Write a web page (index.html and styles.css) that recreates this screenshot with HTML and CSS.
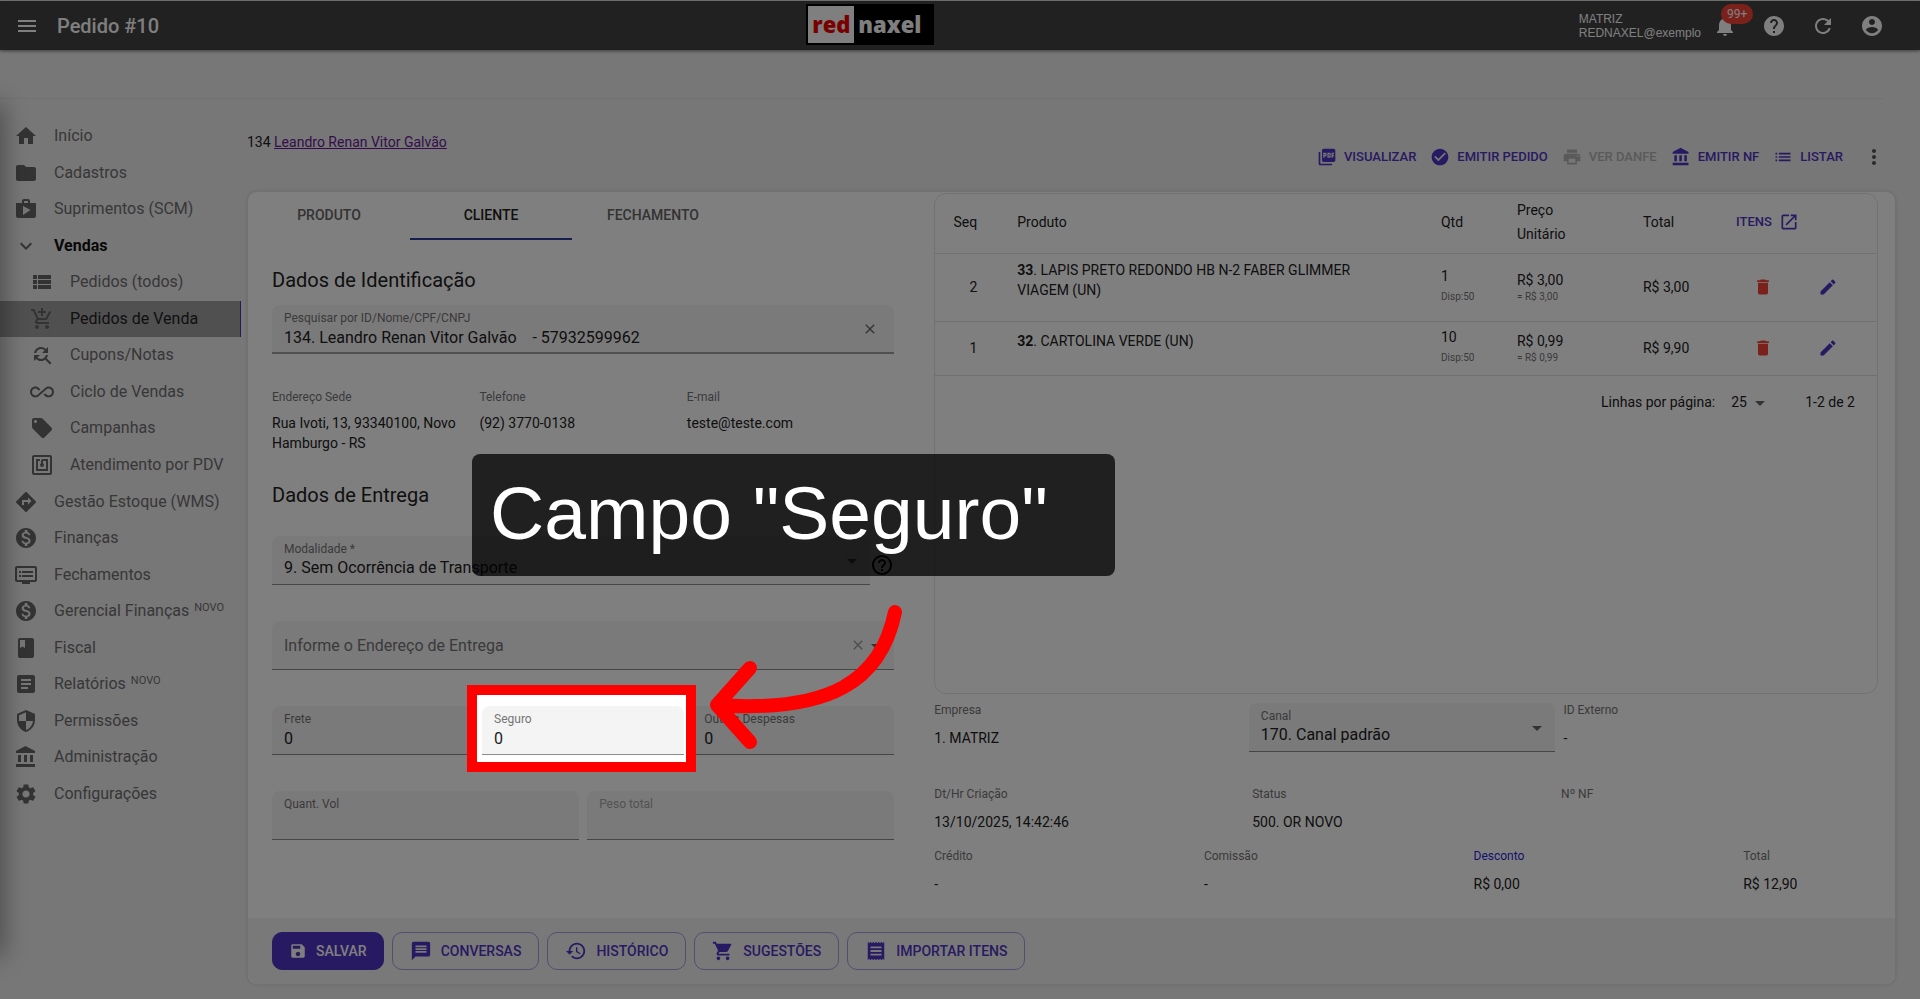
FILE: index.html
```html
<!DOCTYPE html>
<html lang="pt-BR">
<head>
  <meta charset="UTF-8" />
  <meta name="viewport" content="width=device-width, initial-scale=1" />
  <title>Pedido #10</title>
  <link rel="stylesheet" href="styles.css">
</head>
<body>
  <!-- icon set -->
  <svg class="sprite" aria-hidden="true">
    <symbol id="i-menu" viewBox="0 0 24 24"><path d="M3 18h18v-2H3v2zm0-5h18v-2H3v2zm0-7v2h18V6H3z"/></symbol>
    <symbol id="i-home" viewBox="0 0 24 24"><path d="M10 20v-6h4v6h5v-8h3L12 3 2 12h3v8z"/></symbol>
    <symbol id="i-folder" viewBox="0 0 24 24"><path d="M10 4H4c-1.1 0-1.99.9-1.99 2L2 18c0 1.1.9 2 2 2h16c1.1 0 2-.9 2-2V8c0-1.1-.9-2-2-2h-8l-2-2z"/></symbol>
    <symbol id="i-shop" viewBox="0 0 24 24"><path d="M16 6V4c0-1.11-.89-2-2-2h-4c-1.11 0-2 .89-2 2v2H2v13c0 1.11.89 2 2 2h16c1.11 0 2-.89 2-2V6h-6zm-6-2h4v2h-4V4zM9 18V9l7.500 4L9 18z"/></symbol>
    <symbol id="i-expand" viewBox="0 0 24 24"><path d="M16.59 8.59L12 13.17 7.41 8.59 6 10l6 6 6-6z"/></symbol>
    <symbol id="i-viewlist" viewBox="0 0 24 24"><path d="M3 14h4v-4H3v4zm0 5h4v-4H3v4zM3 9h4V5H3v4zm5 5h13v-4H8v4zm0 5h13v-4H8v4zM8 5v4h13V5H8z"/></symbol>
    <symbol id="i-addcart" viewBox="0 0 24 24"><path d="M11 9h2V6h3V4h-3V1h-2v3H8v2h3v3zm-4 9c-1.1 0-1.99.9-1.99 2S5.9 22 7 22s2-.9 2-2-.9-2-2-2zm10 0c-1.1 0-1.99.9-1.99 2s.89 2 1.99 2 2-.9 2-2-.9-2-2-2zm-9.83-3.25l.03-.12.9-1.63h7.45c.75 0 1.41-.41 1.75-1.03l3.86-7.01L19.42 4h-.01l-1.1 2-2.76 5H8.53l-.13-.27L6.16 6l-.95-2-.94-2H1v2h2l3.6 7.59-1.35 2.45c-.16.28-.25.61-.25.96 0 1.1.9 2 2 2h12v-2H7.42c-.13 0-.25-.11-.25-.25z"/></symbol>
    <symbol id="i-findreplace" viewBox="0 0 24 24"><path d="M11 6c1.38 0 2.63.56 3.54 1.46L12 10h6V4l-2.05 2.05C14.68 4.78 12.93 4 11 4c-3.53 0-6.43 2.61-6.92 6H6.1c.46-2.28 2.48-4 4.9-4zm5.64 9.14c.66-.9 1.12-1.97 1.28-3.14H15.9c-.46 2.28-2.48 4-4.9 4-1.38 0-2.63-.56-3.54-1.46L10 12H4v6l2.05-2.05C7.32 17.22 9.07 18 11 18c1.55 0 2.98-.51 4.14-1.36L20 21.49 21.49 20l-4.85-4.86z"/></symbol>
    <symbol id="i-infinite" viewBox="0 0 24 24"><path d="M18.6 6.62c-1.44 0-2.8.56-3.77 1.53L12 10.66 10.48 12h.01L7.8 14.39c-.64.64-1.49.99-2.4.99-1.87 0-3.39-1.51-3.39-3.38S3.53 8.62 5.4 8.62c.91 0 1.76.35 2.44 1.03l1.13 1 1.51-1.34L9.22 8.2C8.2 7.18 6.84 6.62 5.4 6.62 2.42 6.62 0 9.04 0 12s2.42 5.38 5.4 5.38c1.44 0 2.8-.56 3.77-1.53l2.83-2.5.01.01L13.52 12h-.01l2.69-2.39c.64-.64 1.49-.99 2.4-.99 1.87 0 3.39 1.51 3.39 3.38s-1.52 3.38-3.39 3.38c-.9 0-1.76-.35-2.44-1.03l-1.14-1.01-1.51 1.34 1.27 1.12c1.02 1.01 2.37 1.57 3.82 1.57 2.98 0 5.4-2.41 5.4-5.38s-2.42-5.37-5.4-5.37z"/></symbol>
    <symbol id="i-tag" viewBox="0 0 24 24"><path d="M21.41 11.58l-9-9C12.05 2.22 11.55 2 11 2H4c-1.1 0-2 .9-2 2v7c0 .55.22 1.05.59 1.42l9 9c.36.36.86.58 1.41.58.55 0 1.05-.22 1.41-.59l7-7c.37-.36.59-.86.59-1.41 0-.55-.23-1.06-.59-1.42zM5.5 7C4.67 7 4 6.33 4 5.5S4.67 4 5.500 4 7 4.67 7 5.500 6.33 7 5.500 7z"/></symbol>
    <symbol id="i-nfc" viewBox="0 0 24 24"><path d="M20 2H4c-1.1 0-2 .9-2 2v16c0 1.1.9 2 2 2h16c1.1 0 2-.9 2-2V4c0-1.1-.9-2-2-2zm0 18H4V4h16v16zM18 6h-5c-1.1 0-2 .9-2 2v2.28c-.6.35-1 .98-1 1.72 0 1.1.9 2 2 2s2-.9 2-2c0-.74-.4-1.38-1-1.72V8h3v8H8V8h2V6H6v12h12V6z"/></symbol>
    <symbol id="i-directions" viewBox="0 0 24 24"><path d="M21.71 11.29l-9-9c-.39-.39-1.02-.39-1.41 0l-9 9c-.39.39-.39 1.02 0 1.41l9 9c.39.39 1.02.39 1.41 0l9-9c.39-.38.39-1.01 0-1.41zM14 14.5V12h-4v3H8v-4c0-.55.45-1 1-1h5V7.5l3.5 3.5-3.5 3.5z"/></symbol>
    <symbol id="i-money" viewBox="0 0 24 24"><path d="M12 2C6.48 2 2 6.48 2 12s4.48 10 10 10 10-4.48 10-10S17.52 2 12 2zm1.41 16.09V20h-2.67v-1.93c-1.71-.36-3.16-1.46-3.27-3.4h1.96c.1 1.05.82 1.87 2.65 1.87 1.96 0 2.4-.98 2.4-1.59 0-.83-.44-1.61-2.67-2.14-2.48-.6-4.18-1.62-4.18-3.67 0-1.72 1.39-2.84 3.11-3.21V4h2.67v1.95c1.86.45 2.79 1.86 2.85 3.39H14.3c-.05-1.11-.64-1.87-2.22-1.87-1.5 0-2.4.68-2.4 1.64 0 .84.65 1.39 2.67 1.91s4.18 1.39 4.18 3.91c-.01 1.83-1.38 2.83-3.12 3.16z"/></symbol>
    <symbol id="i-dvr" viewBox="0 0 24 24"><path d="M21 3H3c-1.1 0-2 .9-2 2v12c0 1.1.9 2 2 2h5v2h8v-2h5c1.1 0 1.99-.9 1.99-2L23 5c0-1.1-.9-2-2-2zm0 14H3V5h18v12zm-2-9H8v2h11V8zm0 4H8v2h11v-2zM7 8H5v2h2V8zm0 4H5v2h2v-2z"/></symbol>
    <symbol id="i-book" viewBox="0 0 24 24"><path d="M18 2H6c-1.1 0-2 .9-2 2v16c0 1.1.9 2 2 2h12c1.1 0 2-.9 2-2V4c0-1.1-.9-2-2-2zM6 4h5v8l-2.5-1.5L6 12V4z"/></symbol>
    <symbol id="i-article" viewBox="0 0 24 24"><path d="M19 3H5c-1.1 0-2 .9-2 2v14c0 1.1.9 2 2 2h14c1.1 0 2-.9 2-2V5c0-1.1-.9-2-2-2zm-5 14H7v-2h7v2zm3-4H7v-2h10v2zm0-4H7V7h10v2z"/></symbol>
    <symbol id="i-receipt" viewBox="0 0 24 24"><path d="M18 17H6v-2h12v2zm0-4H6v-2h12v2zm0-4H6V7h12v2zM3 22l1.5-1.5L6 22l1.5-1.5L9 22l1.5-1.5L12 22l1.5-1.5L15 22l1.5-1.5L18 22l1.5-1.5L21 22V2l-1.5 1.5L18 2l-1.5 1.5L15 2l-1.5 1.5L12 2l-1.5 1.5L9 2 7.5 3.5 6 2 4.5 3.5 3 2v20z"/></symbol>
    <symbol id="i-shield" viewBox="0 0 24 24"><path d="M12 1L3 5v6c0 5.55 3.84 10.74 9 12 5.16-1.26 9-6.45 9-12V5l-9-4zm0 10.99h7c-.53 4.12-3.28 7.79-7 8.94V12H5V6.3l7-3.11v8.8z"/></symbol>
    <symbol id="i-bank" viewBox="0 0 24 24"><path d="M4 10v7h3v-7H4zm6 0v7h3v-7h-3zM2 22h19v-3H2v3zm14-12v7h3v-7h-3zm-4.5-9L2 6v2h19V6l-9.5-5z"/></symbol>
    <symbol id="i-gear" viewBox="0 0 24 24"><path d="M19.14 12.94c.04-.3.06-.61.06-.94 0-.32-.02-.64-.07-.94l2.03-1.58c.18-.14.23-.41.12-.61l-1.92-3.32c-.12-.22-.37-.29-.59-.22l-2.39.96c-.5-.38-1.03-.7-1.62-.94l-.36-2.54c-.04-.24-.24-.41-.48-.41h-3.84c-.24 0-.43.17-.47.41l-.36 2.54c-.59.24-1.13.57-1.62.94l-2.39-.96c-.22-.08-.47 0-.59.22L2.74 8.87c-.12.21-.08.47.12.61l2.03 1.58c-.05.3-.09.63-.09.94s.02.64.07.94l-2.03 1.58c-.18.14-.23.41-.12.61l1.92 3.32c.12.22.37.29.59.22l2.39-.96c.5.38 1.03.7 1.62.94l.36 2.54c.05.24.24.41.48.41h3.84c.24 0 .44-.17.47-.41l.36-2.54c.59-.24 1.13-.56 1.62-.94l2.39.96c.22.08.47 0 .59-.22l1.92-3.32c.12-.22.07-.47-.12-.61l-2.01-1.58zM12 15.6c-1.98 0-3.6-1.62-3.6-3.6s1.62-3.6 3.6-3.6 3.6 1.62 3.6 3.6-1.62 3.6-3.6 3.6z"/></symbol>
    <symbol id="i-bell" viewBox="0 0 24 24"><path d="M12 22c1.1 0 2-.9 2-2h-4c0 1.1.89 2 2 2zm6-6v-5c0-3.07-1.64-5.64-4.5-6.32V4c0-.83-.67-1.5-1.5-1.5s-1.5.67-1.5 1.500v.68C7.63 5.36 6 7.92 6 11v5l-2 2v1h16v-1l-2-2z"/></symbol>
    <symbol id="i-help" viewBox="0 0 24 24"><path d="M12 2C6.48 2 2 6.48 2 12s4.48 10 10 10 10-4.48 10-10S17.52 2 12 2zm1 17h-2v-2h2v2zm2.07-7.75l-.9.92C13.45 12.9 13 13.5 13 15h-2v-.5c0-1.1.45-2.1 1.17-2.83l1.24-1.26c.37-.36.59-.86.59-1.41 0-1.1-.9-2-2-2s-2 .9-2 2H8c0-2.21 1.79-4 4-4s4 1.79 4 4c0 .88-.36 1.68-.93 2.25z"/></symbol>
    <symbol id="i-helpout" viewBox="0 0 24 24"><path d="M11 18h2v-2h-2v2zm1-16C6.48 2 2 6.48 2 12s4.48 10 10 10 10-4.48 10-10S17.52 2 12 2zm0 18c-4.41 0-8-3.59-8-8s3.59-8 8-8 8 3.59 8 8-3.59 8-8 8zm0-14c-2.21 0-4 1.79-4 4h2c0-1.1.9-2 2-2s2 .9 2 2c0 2-3 1.75-3 5h2c0-2.25 3-2.5 3-5 0-2.21-1.79-4-4-4z"/></symbol>
    <symbol id="i-refresh" viewBox="0 0 24 24"><path d="M17.65 6.35C16.2 4.9 14.21 4 12 4c-4.42 0-7.99 3.58-7.99 8s3.57 8 7.99 8c3.73 0 6.84-2.55 7.73-6h-2.08c-.82 2.33-3.04 4-5.65 4-3.31 0-6-2.69-6-6s2.69-6 6-6c1.66 0 3.14.69 4.22 1.78L13 11h7V4l-2.35 2.35z"/></symbol>
    <symbol id="i-account" viewBox="0 0 24 24"><path d="M12 2C6.48 2 2 6.48 2 12s4.48 10 10 10 10-4.48 10-10S17.52 2 12 2zm0 3c1.66 0 3 1.34 3 3s-1.34 3-3 3-3-1.34-3-3 1.34-3 3-3zm0 14.2c-2.5 0-4.71-1.28-6-3.22.03-1.99 4-3.08 6-3.08 1.99 0 5.97 1.09 6 3.08-1.29 1.94-3.5 3.22-6 3.22z"/></symbol>
    <symbol id="i-pdf" viewBox="0 0 24 24"><path d="M20 2H8c-1.1 0-2 .9-2 2v12c0 1.1.9 2 2 2h12c1.1 0 2-.9 2-2V4c0-1.1-.9-2-2-2zm-8.5 7.5c0 .83-.67 1.5-1.5 1.5H9v2H7.5V7H10c.83 0 1.5.67 1.5 1.500v1zm5 2c0 .83-.67 1.5-1.5 1.5h-2.500V7H15c.83 0 1.500.67 1.500 1.500v3zm4-3H19v1h1.500V11H19v2h-1.500V7h3v1.500zM9 9.500h1v-1H9v1zM4 6H2v14c0 1.1.9 2 2 2h14v-2H4V6zm10 5.500h1v-3h-1v3z"/></symbol>
    <symbol id="i-check" viewBox="0 0 24 24"><path d="M12 2C6.48 2 2 6.48 2 12s4.48 10 10 10 10-4.48 10-10S17.52 2 12 2zm-2 15l-5-5 1.41-1.41L10 14.17l7.59-7.59L19 8l-9 9z"/></symbol>
    <symbol id="i-print" viewBox="0 0 24 24"><path d="M19 8H5c-1.66 0-3 1.34-3 3v6h4v4h12v-4h4v-6c0-1.66-1.34-3-3-3zm-3 11H8v-5h8v5zm3-7c-.55 0-1-.45-1-1s.45-1 1-1 1 .45 1 1-.45 1-1 1zm-1-9H6v4h12V3z"/></symbol>
    <symbol id="i-list" viewBox="0 0 24 24"><path d="M3 13h2v-2H3v2zm0 4h2v-2H3v2zm0-8h2V7H3v2zm4 4h14v-2H7v2zm0 4h14v-2H7v2zM7 7v2h14V7H7z"/></symbol>
    <symbol id="i-more" viewBox="0 0 24 24"><path d="M12 8c1.1 0 2-.9 2-2s-.9-2-2-2-2 .9-2 2 .9 2 2 2zm0 2c-1.1 0-2 .9-2 2s.9 2 2 2 2-.9 2-2-.9-2-2-2zm0 6c-1.1 0-2 .9-2 2s.9 2 2 2 2-.9 2-2-.9-2-2-2z"/></symbol>
    <symbol id="i-open" viewBox="0 0 24 24"><path d="M19 19H5V5h7V3H5c-1.11 0-2 .9-2 2v14c0 1.1.89 2 2 2h14c1.1 0 2-.9 2-2v-7h-2v7zM14 3v2h3.59l-9.83 9.83 1.41 1.41L19 6.41V10h2V3h-7z"/></symbol>
    <symbol id="i-trash" viewBox="0 0 24 24"><path d="M6 19c0 1.1.9 2 2 2h8c1.1 0 2-.9 2-2V7H6v12zM19 4h-3.5l-1-1h-5l-1 1H5v2h14V4z"/></symbol>
    <symbol id="i-edit" viewBox="0 0 24 24"><path d="M3 17.25V21h3.75L17.81 9.94l-3.75-3.75L3 17.25zM20.71 7.04c.39-.39.39-1.02 0-1.41l-2.34-2.34c-.39-.39-1.02-.39-1.41 0l-1.83 1.83 3.75 3.75 1.83-1.83z"/></symbol>
    <symbol id="i-save" viewBox="0 0 24 24"><path d="M17 3H5c-1.11 0-2 .9-2 2v14c0 1.1.89 2 2 2h14c1.1 0 2-.9 2-2V7l-4-4zm-5 16c-1.66 0-3-1.34-3-3s1.34-3 3-3 3 1.34 3 3-1.34 3-3 3zm3-10H5V5h10v4z"/></symbol>
    <symbol id="i-message" viewBox="0 0 24 24"><path d="M20 2H4c-1.1 0-1.99.9-1.99 2L2 22l4-4h14c1.1 0 2-.9 2-2V4c0-1.1-.9-2-2-2zm-2 12H6v-2h12v2zm0-3H6V9h12v2zm0-3H6V6h12v2z"/></symbol>
    <symbol id="i-history" viewBox="0 0 24 24"><path d="M13 3c-4.97 0-9 4.03-9 9H1l3.89 3.89.07.14L9 12H6c0-3.87 3.13-7 7-7s7 3.13 7 7-3.13 7-7 7c-1.93 0-3.68-.79-4.94-2.06l-1.42 1.42C8.27 19.99 10.51 21 13 21c4.97 0 9-4.03 9-9s-4.03-9-9-9zm-1 5v5l4.28 2.54.72-1.21-3.5-2.08V8H12z"/></symbol>
    <symbol id="i-cart" viewBox="0 0 24 24"><path d="M7 18c-1.1 0-1.99.9-1.99 2S5.9 22 7 22s2-.9 2-2-.9-2-2-2zM1 2v2h2l3.6 7.59-1.35 2.45c-.16.28-.25.61-.25.96 0 1.1.9 2 2 2h12v-2H7.42c-.14 0-.25-.11-.25-.25l.03-.12.9-1.63h7.45c.75 0 1.41-.41 1.75-1.03l3.58-6.49c.08-.14.12-.31.12-.48 0-.55-.45-1-1-1H5.21l-.94-2H1zm16 16c-1.1 0-1.99.9-1.99 2s.89 2 1.99 2 2-.9 2-2-.9-2-2-2z"/></symbol>
    <symbol id="i-drop" viewBox="0 0 24 24"><path d="M7 10l5 5 5-5z"/></symbol>
    <symbol id="i-close" viewBox="0 0 24 24"><path d="M19 6.41L17.59 5 12 10.59 6.41 5 5 6.41 10.59 12 5 17.59 6.41 19 12 13.41 17.59 19 19 17.59 13.41 12z"/></symbol>
  </svg>

  <header class="topbar">
    <div class="topbar-left">
      <button class="icon-btn" aria-label="Menu"><svg class="icon"><use href="#i-menu"/></svg></button>
      <h1>Pedido #10</h1>
    </div>
    <a href="#" class="logo"><span class="logo-red">red</span><span class="logo-naxel">naxel</span></a>
    <div class="topbar-right">
      <p class="user">MATRIZ<br>REDNAXEL@exemplo</p>
      <button class="icon-btn bell" aria-label="Notificações"><svg class="icon"><use href="#i-bell"/></svg><span class="badge">99+</span></button>
      <button class="icon-btn" aria-label="Ajuda"><svg class="icon"><use href="#i-help"/></svg></button>
      <button class="icon-btn" aria-label="Atualizar"><svg class="icon"><use href="#i-refresh"/></svg></button>
      <button class="icon-btn" aria-label="Conta"><svg class="icon"><use href="#i-account"/></svg></button>
    </div>
  </header>
  <div class="subbar"></div>

  <div class="layout">
    <nav class="sidebar">
      <a href="#"><svg class="icon"><use href="#i-home"/></svg>Início</a>
      <a href="#"><svg class="icon"><use href="#i-folder"/></svg>Cadastros</a>
      <a href="#"><svg class="icon"><use href="#i-shop"/></svg>Suprimentos (SCM)</a>
      <a href="#" class="open"><svg class="icon"><use href="#i-expand"/></svg>Vendas</a>
      <a href="#" class="sub"><svg class="icon"><use href="#i-viewlist"/></svg>Pedidos (todos)</a>
      <a href="#" class="sub active"><svg class="icon"><use href="#i-addcart"/></svg>Pedidos de Venda</a>
      <a href="#" class="sub"><svg class="icon"><use href="#i-findreplace"/></svg>Cupons/Notas</a>
      <a href="#" class="sub"><svg class="icon"><use href="#i-infinite"/></svg>Ciclo de Vendas</a>
      <a href="#" class="sub"><svg class="icon"><use href="#i-tag"/></svg>Campanhas</a>
      <a href="#" class="sub"><svg class="icon"><use href="#i-nfc"/></svg>Atendimento por PDV</a>
      <a href="#"><svg class="icon"><use href="#i-directions"/></svg>Gestão Estoque (WMS)</a>
      <a href="#"><svg class="icon"><use href="#i-money"/></svg>Finanças</a>
      <a href="#"><svg class="icon"><use href="#i-dvr"/></svg>Fechamentos</a>
      <a href="#"><svg class="icon"><use href="#i-money"/></svg>Gerencial Finanças<span class="new">NOVO</span></a>
      <a href="#"><svg class="icon"><use href="#i-book"/></svg>Fiscal</a>
      <a href="#"><svg class="icon"><use href="#i-article"/></svg>Relatórios<span class="new">NOVO</span></a>
      <a href="#"><svg class="icon"><use href="#i-shield"/></svg>Permissões</a>
      <a href="#"><svg class="icon"><use href="#i-bank"/></svg>Administração</a>
      <a href="#"><svg class="icon"><use href="#i-gear"/></svg>Configurações</a>
    </nav>

    <main>
      <div class="page-head">
        <p class="crumb">134 <a href="#">Leandro Renan Vitor Galvão</a></p>
        <div class="actions">
          <button class="action"><svg class="icon"><use href="#i-pdf"/></svg>VISUALIZAR</button>
          <button class="action"><svg class="icon"><use href="#i-check"/></svg>EMITIR PEDIDO</button>
          <button class="action" disabled><svg class="icon"><use href="#i-print"/></svg>VER DANFE</button>
          <button class="action"><svg class="icon"><use href="#i-bank"/></svg>EMITIR NF</button>
          <button class="action"><svg class="icon"><use href="#i-list"/></svg>LISTAR</button>
          <button class="icon-btn more" aria-label="Mais opções"><svg class="icon"><use href="#i-more"/></svg></button>
        </div>
      </div>

      <div class="card">
        <div class="card-body">
          <section class="client">
            <div class="tabs" role="tablist">
              <button role="tab">PRODUTO</button>
              <button role="tab" class="selected" aria-selected="true">CLIENTE</button>
              <button role="tab">FECHAMENTO</button>
            </div>

            <form class="form">
              <h2>Dados de Identificação</h2>
              <div class="field strong">
                <label for="cliente">Pesquisar por ID/Nome/CPF/CNPJ</label>
                <input id="cliente" type="text" value="134. Leandro Renan Vitor Galvão    - 57932599962">
                <button type="button" class="clear" aria-label="Limpar"><svg class="icon"><use href="#i-close"/></svg></button>
              </div>

              <dl class="contact">
                <div><dt>Endereço Sede</dt><dd>Rua Ivoti, 13, 93340100, Novo Hamburgo - RS</dd></div>
                <div><dt>Telefone</dt><dd>(92) 3770-0138</dd></div>
                <div><dt>E-mail</dt><dd>teste@teste.com</dd></div>
              </dl>

              <h2>Dados de Entrega</h2>
              <div class="row mode">
                <div class="field">
                  <label for="modalidade">Modalidade *</label>
                  <select id="modalidade"><option>9. Sem Ocorrência de Transporte</option></select>
                  <svg class="icon caret"><use href="#i-drop"/></svg>
                </div>
                <button type="button" class="icon-btn" aria-label="Ajuda sobre modalidade"><svg class="icon"><use href="#i-helpout"/></svg></button>
              </div>
              <div class="row">
                <div class="field address">
                  <input type="text" placeholder="Informe o Endereço de Entrega" aria-label="Informe o Endereço de Entrega">
                  <button type="button" class="clear" aria-label="Limpar endereço"><svg class="icon"><use href="#i-close"/></svg></button>
                  <svg class="icon caret"><use href="#i-drop"/></svg>
                </div>
              </div>
              <div class="row">
                <div class="field"><label for="frete">Frete</label><input id="frete" type="text" value="0"></div>
                <div class="field">
                  <label for="seguro">Seguro</label><input id="seguro" type="text" value="0">
                  <!-- tutorial step, anchored to the field it explains -->
                  <div class="tour">
                    <div class="tour-spot"></div>
                    <p class="tour-title">Campo "Seguro"</p>
                    <svg class="tour-arrow" viewBox="0 0 200 150"><path d="M190 11C176 80 125 112 12 104M45 67L12 104L45 141"/></svg>
                  </div>
                </div>
                <div class="field"><label for="outras">Outras Despesas</label><input id="outras" type="text" value="0"></div>
              </div>
              <div class="row">
                <div class="field"><label for="vol">Quant. Vol</label><input id="vol" type="text"></div>
                <div class="field disabled"><label for="peso">Peso total</label><input id="peso" type="text" disabled></div>
              </div>
            </form>
          </section>

          <section class="order">
            <div class="items">
              <table>
                <colgroup>
                  <col class="w-seq"><col><col class="w-qtd"><col class="w-price"><col class="w-total"><col class="w-del"><col class="w-edit">
                </colgroup>
                <thead>
                  <tr>
                    <th class="c-seq">Seq</th>
                    <th>Produto</th>
                    <th>Qtd</th>
                    <th class="c-price">Preço Unitário</th>
                    <th>Total</th>
                    <th colspan="2"><button class="action">ITENS<svg class="icon"><use href="#i-open"/></svg></button></th>
                  </tr>
                </thead>
                <tbody>
                  <tr class="tall">
                    <td class="c-seq">2</td>
                    <td class="c-prod"><b>33</b>. LAPIS PRETO REDONDO HB N-2 FABER GLIMMER VIAGEM (UN)</td>
                    <td class="c-qtd">1<small>Disp:50</small></td>
                    <td>R$ 3,00<small>= R$ 3,00</small></td>
                    <td>R$ 3,00</td>
                    <td class="c-del"><button class="icon-btn del" aria-label="Excluir"><svg class="icon"><use href="#i-trash"/></svg></button></td>
                    <td class="c-edit"><button class="icon-btn edit" aria-label="Editar"><svg class="icon"><use href="#i-edit"/></svg></button></td>
                  </tr>
                  <tr>
                    <td class="c-seq">1</td>
                    <td class="c-prod"><b>32</b>. CARTOLINA VERDE (UN)</td>
                    <td class="c-qtd">10<small>Disp:50</small></td>
                    <td>R$ 0,99<small>= R$ 0,99</small></td>
                    <td>R$ 9,90</td>
                    <td class="c-del"><button class="icon-btn del" aria-label="Excluir"><svg class="icon"><use href="#i-trash"/></svg></button></td>
                    <td class="c-edit"><button class="icon-btn edit" aria-label="Editar"><svg class="icon"><use href="#i-edit"/></svg></button></td>
                  </tr>
                </tbody>
              </table>
              <div class="pager">
                <label for="linhas">Linhas por página:</label>
                <div class="pager-size">
                  <select id="linhas"><option>25</option></select>
                  <svg class="icon caret"><use href="#i-drop"/></svg>
                </div>
                <span>1-2 de 2</span>
              </div>
            </div>

            <div class="info-a">
              <dl><dt>Empresa</dt><dd>1. MATRIZ</dd></dl>
              <div class="field">
                <label for="canal">Canal</label>
                <select id="canal"><option>170. Canal padrão</option></select>
                <svg class="icon caret"><use href="#i-drop"/></svg>
              </div>
              <dl><dt>ID Externo</dt><dd>-</dd></dl>
            </div>
            <dl class="info-b">
              <div><dt>Dt/Hr Criação</dt><dd>13/10/2025, 14:42:46</dd></div>
              <div><dt>Status</dt><dd>500. OR NOVO</dd></div>
              <div><dt>Nº NF</dt></div>
            </dl>
            <dl class="info-c">
              <div><dt>Crédito</dt><dd>-</dd></div>
              <div><dt>Comissão</dt><dd>-</dd></div>
              <div><dt><a href="#">Desconto</a></dt><dd>R$ 0,00</dd></div>
              <div><dt>Total</dt><dd>R$ 12,90</dd></div>
            </dl>
          </section>
        </div>

        <footer class="card-foot">
          <button class="btn primary"><svg class="icon"><use href="#i-save"/></svg>SALVAR</button>
          <button class="btn"><svg class="icon"><use href="#i-message"/></svg>CONVERSAS</button>
          <button class="btn"><svg class="icon"><use href="#i-history"/></svg>HISTÓRICO</button>
          <button class="btn"><svg class="icon"><use href="#i-cart"/></svg>SUGESTÕES</button>
          <button class="btn"><svg class="icon"><use href="#i-receipt"/></svg>IMPORTAR ITENS</button>
        </footer>
      </div>
    </main>
  </div>
</body>
</html>
```
FILE: styles.css
```css
* {
  box-sizing: border-box;
}
html, body {
  margin: 0;
  padding: 0;
}
body {
  min-height: 100vh;
  padding-top: 1px;
  background: #eee;
  font-family: Roboto, "Liberation Sans", sans-serif;
  font-size: 14px;
  line-height: 20px;
  color: #212121;
  overflow: hidden;
}
h1, h2, p, dl, dd {
  margin: 0;
}
button, input, select {
  font: inherit;
  color: inherit;
  margin: 0;
  padding: 0;
  border: none;
  background: none;
}
.sprite {
  position: absolute;
  width: 0;
  height: 0;
}
.icon {
  width: 24px;
  height: 24px;
  fill: currentColor;
  flex: none;
  display: block;
}
.icon-btn {
  display: flex;
  cursor: pointer;
}

/* Top bar */
.topbar {
  height: 49px;
  display: grid;
  grid-template-columns: 5fr auto 6fr;
  align-items: center;
  padding: 0 36px 0 15px;
  background: #424242;
  color: #fff;
  box-shadow: 0 1px 3px rgba(0, 0, 0, 0.5);
}
.topbar-left {
  display: flex;
  align-items: center;
  gap: 18px;
}
.topbar h1 {
  font-size: 20px;
  font-weight: 500;
}
.logo {
  display: flex;
  width: 128px;
  height: 41px;
  padding: 2px;
  margin-bottom: 3px;
  background: #000;
  font: 800 22px/37px "Open Sans", sans-serif;
  text-decoration: none;
}
.logo-red {
  width: 46px;
  background: #fff;
  color: #f00000;
  text-align: center;
}
.logo-naxel {
  flex: 1;
  color: #fff;
  padding-left: 4px;
}
.topbar-right {
  display: flex;
  align-items: center;
  justify-content: flex-end;
  gap: 25px;
}
.user {
  margin-right: -13px;
  font: 12px/14px "Liberation Sans", sans-serif;
}
.bell {
  position: relative;
}
.badge {
  position: absolute;
  top: -10px;
  left: 8px;
  height: 20px;
  padding: 0 6px;
  border-radius: 10px;
  background: #f44336;
  font-size: 12px;
  line-height: 20px;
}
.subbar {
  height: 49px;
  margin-right: 36px;
  border-bottom: 1px solid #e6e0e0;
}

/* Sidebar */
.layout {
  display: flex;
}
.sidebar {
  position: relative;
  width: 241px;
  flex: none;
  display: grid;
  grid-auto-rows: 1fr;
  align-self: flex-start;
  min-height: 694px;
  margin-top: 19px;
}
.sidebar::before {
  content: "";
  position: absolute;
  top: -10px;
  bottom: -140px;
  left: -12px;
  width: 10px;
  box-shadow: 0 0 24px 4px rgba(0, 0, 0, 0.45);
}
.sidebar a {
  display: flex;
  align-items: center;
  gap: 16px;
  padding-left: 14px;
  font-size: 16px;
  white-space: nowrap;
  color: #6e6e6e;
  text-decoration: none;
}
.sidebar .sub {
  padding-left: 30px;
}
.sidebar .open {
  font-weight: 700;
  color: #111;
}
.sidebar .active {
  background: #a0a0a0;
  border-right: 1px solid #5035c4;
  color: #212121;
}
.sidebar .icon {
  color: #666;
}
.sidebar .new {
  margin: -6px 0 0 -11px;
  font-size: 11px;
}

/* Page header */
main {
  flex: 1;
  min-width: 0;
  padding: 0 24px 0 6px;
}
.page-head {
  height: 92px;
  display: flex;
  justify-content: space-between;
}
.crumb {
  padding-top: 33px;
}
.crumb a {
  color: #6a1b9a;
}
.actions {
  display: flex;
  align-items: center;
  gap: 14px;
  padding: 24px 10px 0 0;
}
.action {
  display: flex;
  align-items: center;
  gap: 7px;
  font-size: 13px;
  font-weight: 500;
  color: #5035c4;
  cursor: pointer;
}
.action .icon {
  width: 20px;
  height: 20px;
}
.action:disabled {
  color: #b4b4b4;
}
.more {
  margin-left: 5px;
  color: #555;
}

/* Card */
.card {
  border: 1px solid #e2e2e2;
  border-radius: 10px;
  background: #fff;
  box-shadow: 0 0 3px rgba(0, 0, 0, 0.12);
}
.card-body {
  display: grid;
  grid-template-columns: 5fr 7fr;
  padding-bottom: 24px;
}
.card-foot {
  display: flex;
  gap: 8px;
  padding: 14px 24px;
  border-radius: 0 0 10px 10px;
  background: #f3f3f3;
}
.btn {
  display: flex;
  align-items: center;
  gap: 9px;
  height: 38px;
  padding: 0 17px;
  border: 1px solid #a79be0;
  border-radius: 10px;
  font-weight: 500;
  color: #5035c4;
  cursor: pointer;
}
.btn .icon {
  width: 22px;
  height: 22px;
}
.btn.primary {
  padding: 0 16px;
  border-color: #5035c4;
  background: #5035c4;
  color: #fff;
}
.btn.primary .icon {
  width: 18px;
  height: 18px;
}

/* Tabs */
.tabs {
  display: flex;
}
.tabs button {
  width: 162px;
  height: 48px;
  border-bottom: 2px solid transparent;
  font-weight: 500;
  color: #666;
  cursor: pointer;
}
.tabs .selected {
  border-color: #303f9f;
  color: #212121;
}

/* Form */
.form {
  padding: 28px 40px 0 24px;
}
.form h2 {
  font-size: 20px;
  font-weight: 400;
  line-height: 24px;
}
.field {
  position: relative;
  flex: 1;
  height: 49px;
  padding: 5px 12px 0;
  border-bottom: 1px solid #8c8c8c;
  border-radius: 8px 8px 0 0;
  background: #f4f4f4;
}
.field.strong {
  margin-top: 13px;
  border-bottom: 2px solid #a0a0a0;
}
.field label {
  display: block;
  font-size: 12px;
  line-height: 16px;
  color: #757575;
}
.field input, .field select {
  display: block;
  width: 100%;
  height: 22px;
  font-size: 16px;
  appearance: none;
  outline: none;
}
.field ::placeholder {
  color: #757575;
  opacity: 1;
}
.field.disabled label {
  color: #a5a5a5;
}
.address {
  padding-top: 13px;
}
.caret {
  position: absolute;
  top: 13px;
  right: 6px;
  color: #666;
  pointer-events: none;
}
.clear {
  position: absolute;
  top: 16px;
  right: 16px;
  color: #666;
  cursor: pointer;
}
.clear .icon {
  width: 16px;
  height: 16px;
}
.address .clear {
  right: 28px;
  color: #999;
}
.row {
  display: flex;
  gap: 8px;
  margin-top: 36px;
}
.mode {
  gap: 0;
  align-items: center;
  margin-top: 29px;
}
.mode .icon-btn {
  margin-top: 8px;
  color: #000;
}
dt {
  font-size: 12px;
  line-height: 14px;
  color: #757575;
}
.contact {
  display: grid;
  grid-template-columns: repeat(3, 1fr);
  margin: 36px 0 30px;
}
.contact dt {
  margin-bottom: 9px;
}

/* Items table */
.order {
  padding: 1px 17px 0 0;
}
.items {
  height: 501px;
  border: 1px solid #e4e4e4;
  border-radius: 12px;
}
table {
  width: 100%;
  table-layout: fixed;
  border-collapse: collapse;
}
.w-seq {
  width: 66px;
}
.w-qtd {
  width: 76px;
}
.w-price {
  width: 126px;
}
.w-total {
  width: 93px;
}
.w-del {
  width: 87px;
}
.w-edit {
  width: 70px;
}
th {
  height: 59px;
  padding: 0 16px 2px;
  border-bottom: 1px solid #e0e0e0;
  font-weight: 400;
  line-height: 24px;
  text-align: left;
}
td {
  height: 54px;
  padding: 0 16px;
  border-bottom: 1px solid #e0e0e0;
}
.tall td {
  height: 68px;
}
td small {
  display: block;
  font-size: 10px;
  line-height: 14px;
  color: #757575;
}
.c-seq {
  padding-right: 24px;
  text-align: right;
}
.c-prod {
  padding: 0 60px 14px 16px;
}
.c-qtd small {
  line-height: 22px;
}
.c-price {
  padding-right: 40px;
}
.c-edit {
  padding: 0 0 0 11px;
}
td .icon {
  width: 20px;
  height: 20px;
}
.c-del .icon-btn {
  margin: 0 auto;
}
.del {
  color: #f44336;
}
.edit {
  color: #5035c4;
}
.pager {
  display: flex;
  align-items: center;
  justify-content: flex-end;
  padding: 16px 22px 0 0;
}
.pager-size {
  position: relative;
  width: 58px;
  margin: 0 16px;
}
.pager-size select {
  width: 100%;
  appearance: none;
}
.pager-size .caret {
  top: -1px;
  right: 17px;
}

/* Order info */
dt a {
  color: #2a1fd8;
  text-decoration: none;
}
.order dt {
  margin-bottom: 11px;
}
.info-a {
  display: grid;
  grid-template-columns: repeat(3, 1fr);
  margin-top: 9px;
}
.info-a .field {
  margin-right: 8px;
}
.info-b {
  display: grid;
  grid-template-columns: 318fr 309fr 317fr;
  margin-top: 35px;
}
.info-c {
  display: grid;
  grid-template-columns: repeat(3, 4fr) 2fr;
  margin-top: 17px;
}

/* Tutorial overlay */
.tour {
  position: absolute;
  inset: 0;
  z-index: 50;
  pointer-events: none;
}
.tour-spot {
  position: absolute;
  inset: -21px -12px -18px -15px;
  border: 10px solid #f00;
  box-shadow: 0 0 0 9999px rgba(0, 0, 0, 0.5);
}
.tour-title {
  position: absolute;
  top: -252px;
  left: -10px;
  width: 643px;
  height: 122px;
  padding: 0 18px;
  border-radius: 8px;
  background: rgba(0, 0, 0, 0.75);
  font: 400 75px/118px "Liberation Sans", Arial, sans-serif;
  white-space: nowrap;
  color: #fff;
}
.tour-arrow {
  position: absolute;
  top: -105px;
  left: 223px;
  width: 200px;
  height: 150px;
  fill: none;
  stroke: #f00;
  stroke-width: 14;
  stroke-linecap: round;
  stroke-linejoin: round;
}
```
